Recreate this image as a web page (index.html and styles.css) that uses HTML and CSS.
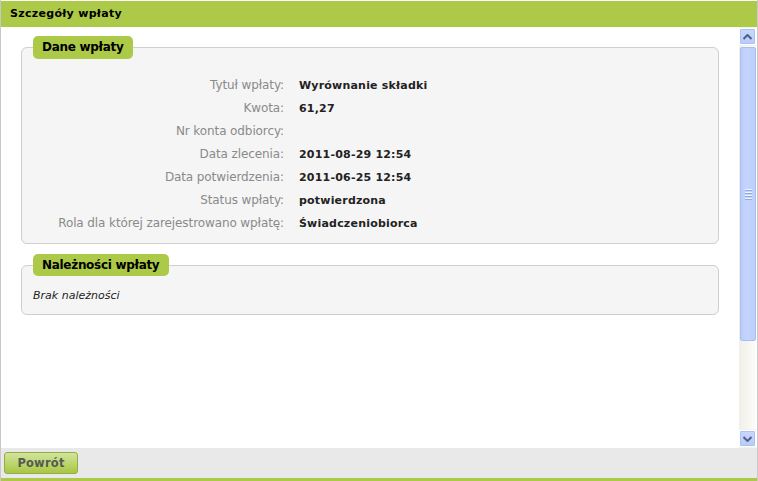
FILE: index.html
```html
<!DOCTYPE html>
<html lang="pl">
<head>
<meta charset="utf-8">
<title>Szczegóły wpłaty</title>
<link rel="stylesheet" href="styles.css">
</head>
<body>
<div class="window">
  <div class="header">Szczegóły wpłaty</div>
  <div class="main">
    <div class="content">
      <fieldset class="box">
        <legend class="box-title">Dane wpłaty</legend>
        <div class="rows">
          <div class="label">Tytuł wpłaty:</div><div class="value">Wyrównanie składki</div>
          <div class="label">Kwota:</div><div class="value">61,27</div>
          <div class="label">Nr konta odbiorcy:</div><div class="value"></div>
          <div class="label">Data zlecenia:</div><div class="value">2011-08-29 12:54</div>
          <div class="label">Data potwierdzenia:</div><div class="value">2011-06-25 12:54</div>
          <div class="label">Status wpłaty:</div><div class="value">potwierdzona</div>
          <div class="label">Rola dla której zarejestrowano wpłatę:</div><div class="value">Świadczeniobiorca</div>
        </div>
      </fieldset>
      <fieldset class="box box-second">
        <legend class="box-title">Należności wpłaty</legend>
        <div class="empty">Brak należności</div>
      </fieldset>
    </div>
    <div class="scrollbar">
      <div class="sb-btn"><svg width="9" height="6" viewBox="0 0 9 6"><path d="M0.5 5 L4.5 1 L8.5 5" fill="none" stroke="#4d6185" stroke-width="2"/></svg></div>
      <div class="sb-track">
        <div class="sb-thumb"><div class="grip"><span></span><span></span><span></span><span></span></div></div>
        <div class="sb-rest"></div>
      </div>
      <div class="sb-btn"><svg width="9" height="6" viewBox="0 0 9 6"><path d="M0.5 1 L4.5 5 L8.5 1" fill="none" stroke="#4d6185" stroke-width="2"/></svg></div>
    </div>
  </div>
  <div class="footer">
    <button class="btn">Powrót</button>
  </div>
</div>
</body>
</html>
```
FILE: styles.css
```css
html, body {
  margin: 0;
  padding: 0;
  background: #ffffff;
}
body {
  font-family: "DejaVu Sans", Verdana, sans-serif;
  font-size: 11px;
  color: #222;
}
.window {
  width: 758px;
  height: 481px;
  box-sizing: border-box;
  display: flex;
  flex-direction: column;
  border-left: 1px solid #c8c8c8;
  border-right: 1px solid #c8c8c8;
}
.header {
  height: 26px;
  margin-top: 1px;
  background: #acc947;
  color: #000;
  font-weight: bold;
  font-size: 11px;
  letter-spacing: 0.3px;
  line-height: 26px;
  padding-left: 9px;
  flex: none;
}
.main {
  flex: 1;
  display: flex;
  min-height: 0;
}
.content {
  flex: 1;
  padding: 9px 20px 0 20px;
}
.box {
  margin: 0;
  padding: 0 11px;
  border: 1px solid #cfcfcf;
  border-radius: 6px;
  background: #f5f5f5;
}
.box-second {
  margin-top: 10px;
}
.box-title {
  margin: 0;
  padding: 0 10px 0 9px;
  height: 23px;
  line-height: 23px;
  background: #acc947;
  border-radius: 5px;
  font-weight: bold;
  font-size: 12px;
  letter-spacing: -0.3px;
  color: #000;
}
.box-second .box-title {
  height: 22px;
  line-height: 22px;
}
.rows {
  display: grid;
  grid-template-columns: 251px 1fr;
  column-gap: 15px;
  padding: 15px 0 8px 0;
}
.label, .value {
  height: 23px;
  line-height: 23px;
}
.label {
  text-align: right;
  color: #8a8a8a;
  font-size: 12px;
  letter-spacing: -0.1px;
}
.value {
  font-weight: bold;
  color: #222;
  letter-spacing: 0.2px;
}
.empty {
  font-style: italic;
  color: #222;
  padding: 12px 0 10px 0;
  line-height: 16px;
}
.scrollbar {
  width: 17px;
  margin-right: 1px;
  display: flex;
  flex-direction: column;
  background: #f4f3ee;
  flex: none;
}
.sb-btn {
  height: 15px;
  margin: 1px 0;
  border: 1px solid #ffffff;
  background: linear-gradient(#c8d7fd, #b8cbf9);
  border-radius: 2px;
  display: flex;
  align-items: center;
  justify-content: center;
  box-shadow: inset 0 0 0 1px #aec2f2;
}
.sb-track {
  flex: 1;
  display: flex;
  flex-direction: column;
  padding: 0 0 0 1px;
  background: linear-gradient(90deg, #f0efe8, #fcfcfa);
}
.sb-thumb {
  height: 292px;
  margin-top: 1px;
  background: linear-gradient(90deg, #b9cdfb, #c4d4fd 40%, #bccffb);
  border: 1px solid #a9bdf0;
  border-radius: 2px;
  display: flex;
  align-items: center;
  justify-content: center;
}
.grip {
  display: flex;
  flex-direction: column;
  gap: 1px;
}
.grip span {
  display: block;
  width: 7px;
  height: 1px;
  background: #eef3ff;
  border-bottom: 1px solid #8fa8e6;
}
.sb-rest {
  flex: 1;
}
.footer {
  height: 26px;
  flex: none;
  background: #e9e9e9;
  border-bottom: 3px solid #acc947;
  display: flex;
  align-items: flex-start;
  padding: 4px 0 0 3px;
}
.btn {
  width: 74px;
  height: 22px;
  margin: 0;
  padding: 0;
  border: 1px solid #93b03e;
  border-radius: 3px;
  background: linear-gradient(#d2e3a0, #bcd56a 55%, #a9c545);
  font-family: "DejaVu Sans", Verdana, sans-serif;
  font-weight: bold;
  font-size: 11.5px;
  letter-spacing: 0.2px;
  color: #555a52;
}
```
